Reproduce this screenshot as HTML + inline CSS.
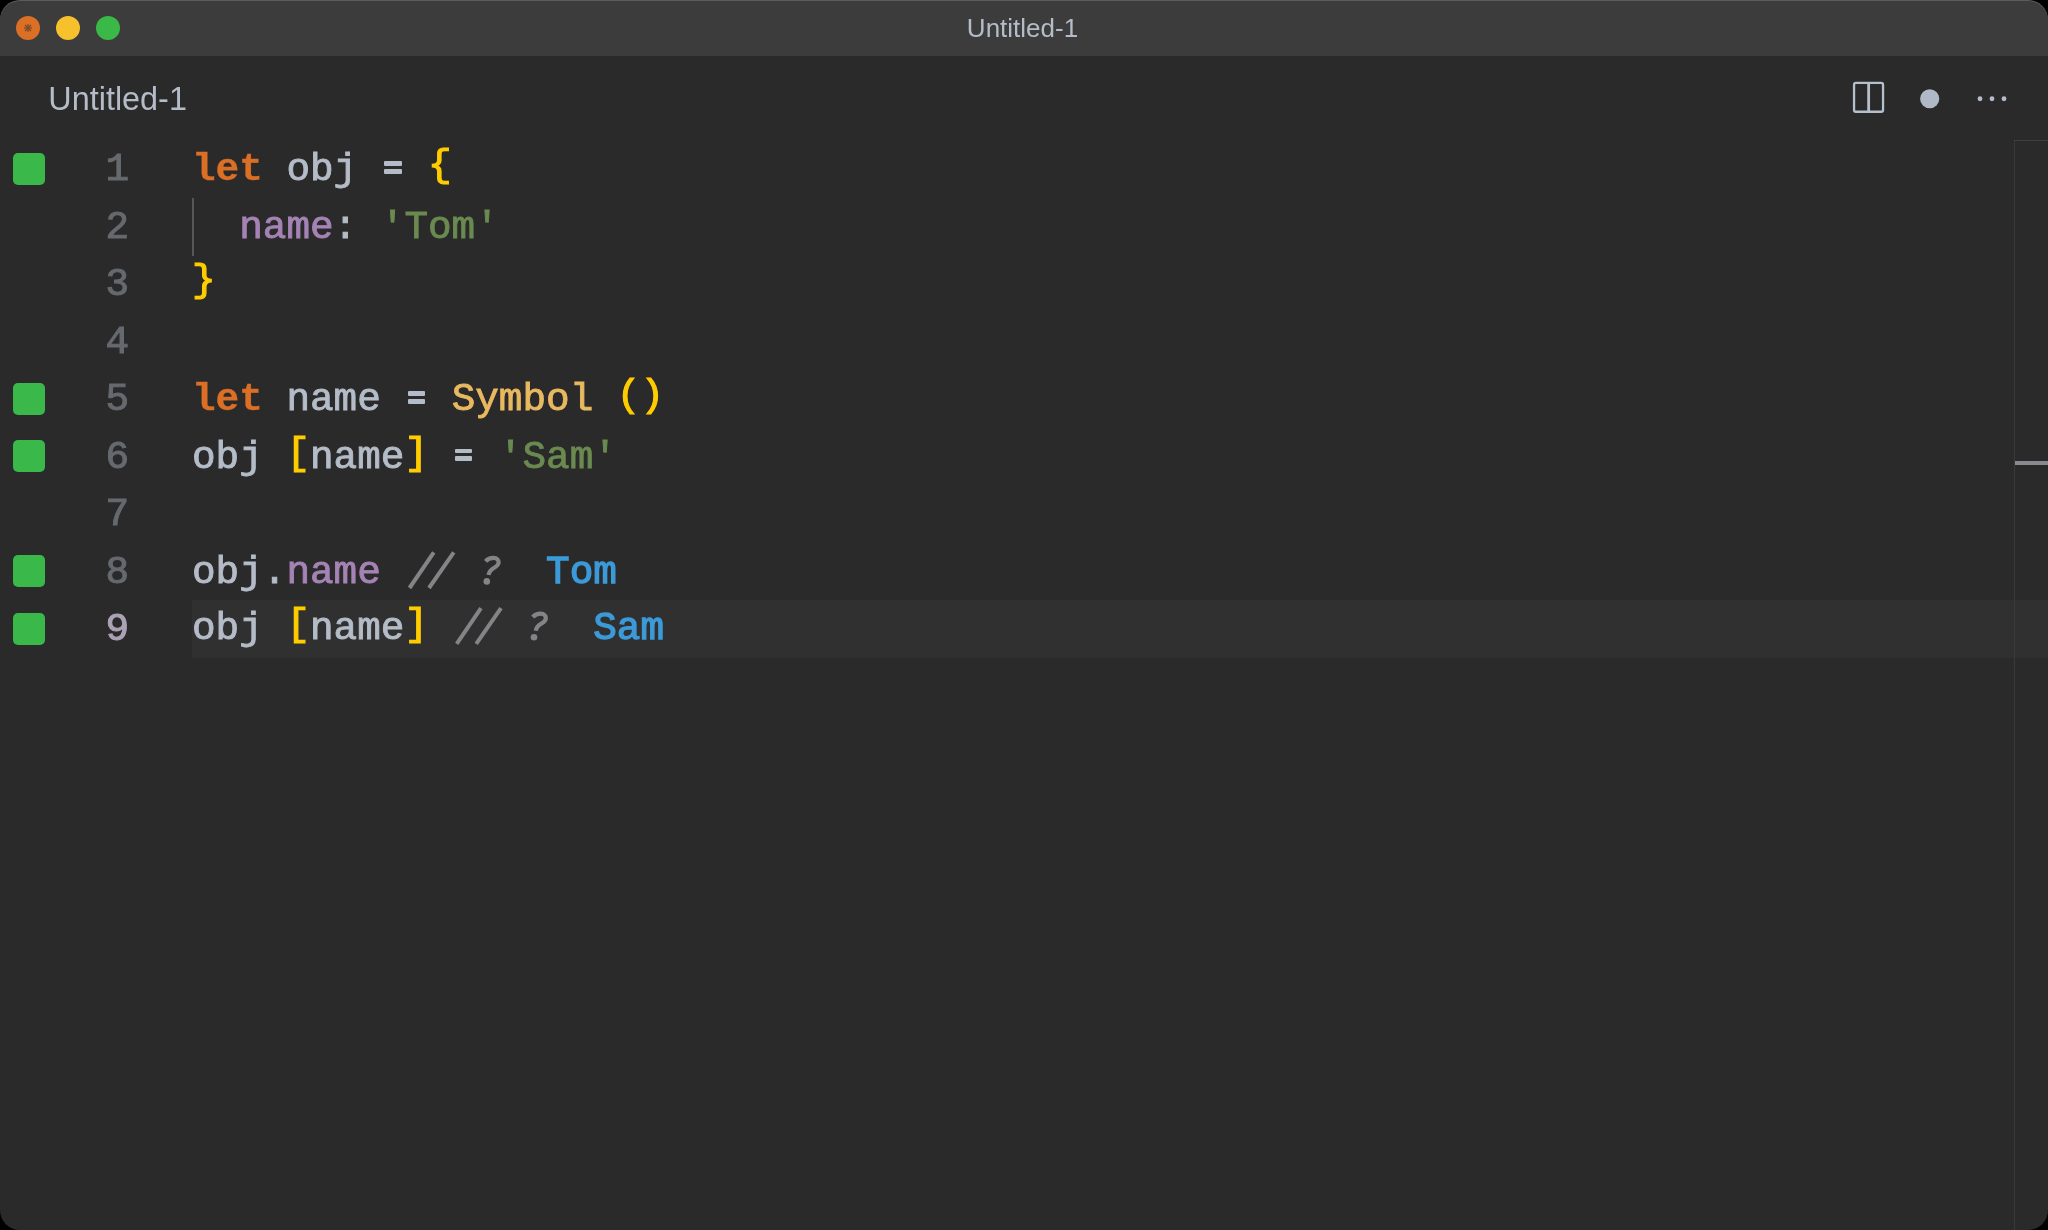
<!DOCTYPE html>
<html>
<head>
<meta charset="utf-8">
<style>
html,body{margin:0;padding:0;background:#000;width:2048px;height:1230px;overflow:hidden;}
#win{position:absolute;left:0;top:0;width:2048px;height:1230px;background:#2a2a2a;border-radius:20px;overflow:hidden;will-change:transform;}
#title{position:absolute;left:0;top:0;width:2048px;height:56px;background:#3c3c3c;}
#title .top{position:absolute;left:0;top:0;width:2048px;height:1px;background:#606266;}
.tl{position:absolute;top:16px;width:24px;height:24px;border-radius:50%;}
#ttext{position:absolute;left:-1.5px;top:0;width:2048px;text-align:center;font-family:"Liberation Sans",sans-serif;font-size:26px;line-height:56px;color:#b4bcc8;}
#tab{position:absolute;left:48.3px;top:79.3px;font-family:"Liberation Sans",sans-serif;font-size:32.4px;line-height:40px;color:#b4bcc8;}
.mono{font-family:"Liberation Mono",monospace;}
#code{position:absolute;left:192px;top:141px;will-change:transform;-webkit-text-stroke:0.9px currentColor;font-family:"Liberation Mono",monospace;font-size:39.33px;color:#b4bcc8;}
.ln{height:57.5px;line-height:57.5px;white-space:pre;}
.num{position:absolute;left:61px;width:68px;margin-top:1px;text-align:right;font-family:"Liberation Mono",monospace;font-size:39.33px;color:#66696e;height:57.5px;line-height:57.5px;-webkit-text-stroke:1px currentColor;}
.sq{position:absolute;left:13px;width:32px;height:32px;border-radius:5px;background:#3bb84a;}
.k{color:#dc6f26;font-weight:bold;-webkit-text-stroke:0.3px #dc6f26;}
.b{color:#ffcc00;position:relative;top:-4px;-webkit-text-stroke:1.2px #ffcc00;}
.p{color:#a583b5;}
.s{color:#6a8a50;}
.f{color:#e8b960;}
.c{color:#848488;font-style:italic;position:relative;left:3px;-webkit-text-stroke:1.6px #848488;}
.eq{position:relative;color:transparent;-webkit-text-stroke:0;}
.eq::before,.eq::after{content:"";position:absolute;left:3.3px;width:17.4px;background:#b4bcc8;border-radius:1px;}
.eq::before{top:14.4px;height:4.4px;}
.eq::after{top:21.5px;height:5.3px;}
.o{color:#3c9ad9;-webkit-text-stroke:1.3px #3c9ad9;}
</style>
</head>
<body>
<div id="win">
  <div id="title">
    <div class="tl" style="left:16px;background:#dc6f26;"></div>
    <svg style="position:absolute;left:22px;top:22px" width="12" height="12"><g stroke="#2a2a2a" stroke-width="1.2" opacity="0.55"><line x1="3" y1="3" x2="9" y2="9"/><line x1="9" y1="3" x2="3" y2="9"/><line x1="6" y1="2" x2="6" y2="10"/><line x1="2" y1="6" x2="10" y2="6"/></g></svg>
    <div class="tl" style="left:56px;background:#f6c12d;"></div>
    <div class="tl" style="left:96px;background:#3ab948;"></div>
    <div id="ttext">Untitled-1</div>
  </div>
  <div id="tab">Untitled-1</div>

  <!-- current line highlight -->
  <div style="position:absolute;left:192px;top:600px;width:1856px;height:57.5px;background:#303030;"></div>
  <!-- indent guide -->
  <div style="position:absolute;left:192px;top:197.5px;width:2px;height:58.5px;background:#555853;"></div>
  <!-- overview ruler -->
  <div style="position:absolute;left:2014px;top:140px;width:1px;height:1090px;background:#393939;"></div>
  <div style="position:absolute;left:2014px;top:140px;width:34px;height:1px;background:#3f3f3f;"></div>
  <div style="position:absolute;left:2015px;top:461px;width:33px;height:4px;background:#8a8a8e;"></div>

  <div class="sq" style="top:152.75px"></div>
  <div class="sq" style="top:382.75px"></div>
  <div class="sq" style="top:440.25px"></div>
  <div class="sq" style="top:555.25px"></div>
  <div class="sq" style="top:612.75px"></div>

  <div class="num" style="top:140px">1</div>
  <div class="num" style="top:197.5px">2</div>
  <div class="num" style="top:255px">3</div>
  <div class="num" style="top:312.5px">4</div>
  <div class="num" style="top:370px">5</div>
  <div class="num" style="top:427.5px">6</div>
  <div class="num" style="top:485px">7</div>
  <div class="num" style="top:542.5px">8</div>
  <div class="num" style="top:600px;color:#aca2b6">9</div>

  <div id="code">
<div class="ln"><span class="k">let</span> obj <span class="eq">=</span> <span class="b">{</span></div>
<div class="ln">  <span class="p">name</span>: <span class="s">'Tom'</span></div>
<div class="ln"><span class="b">}</span></div>
<div class="ln"> </div>
<div class="ln"><span class="k">let</span> name <span class="eq">=</span> <span class="f">Symbol</span> <span class="b">()</span></div>
<div class="ln">obj <span class="b">[</span>name<span class="b">]</span> <span class="eq">=</span> <span class="s">'Sam'</span></div>
<div class="ln"> </div>
<div class="ln">obj.<span class="p">name</span>       <span class="o">Tom</span></div>
<div class="ln" style="position:relative;top:-1.3px">obj <span class="b">[</span>name<span class="b">]</span>       <span class="o">Sam</span></div>
  </div>

  <svg style="position:absolute;left:0;top:0" width="2048" height="1230">
    <g stroke="#848488" stroke-width="4" fill="none">
      <line x1="409.5" y1="588" x2="433.8" y2="552.3"/>
      <line x1="429" y1="588" x2="453.8" y2="552.3"/>
      <line x1="456.7" y1="643.8" x2="481" y2="608.1"/>
      <line x1="476.2" y1="643.8" x2="501" y2="608.1"/>
      <path d="M485.6,561.3 C487.6,558.9 490.6,557.9 493.6,557.9 C496.8,557.9 498.7,559.9 498.6,562.5 C498.5,565.2 496.3,566.5 493.8,568 C491,569.7 489,571.6 488.6,575" stroke-width="4.2"/>
      <path d="M532.8,617.1 C534.8,614.7 537.8,613.7 540.8,613.7 C544,613.7 545.9,615.7 545.8,618.3 C545.7,621 543.5,622.3 541,623.8 C538.2,625.5 536.2,627.4 535.8,630.8" stroke-width="4.2"/>
    </g>
    <circle cx="486.8" cy="581.4" r="3.3" fill="#848488"/>
    <circle cx="534" cy="637.2" r="3.3" fill="#848488"/>
  </svg>
  <!-- right icons -->
  <svg style="position:absolute;left:1840px;top:70px" width="208" height="60" viewBox="1840 70 208 60">
    <rect x="1854.05" y="82.85" width="29" height="28.9" rx="1.8" fill="none" stroke="#b6c0cc" stroke-width="2.3"/>
    <line x1="1868.65" y1="83" x2="1868.65" y2="111.8" stroke="#b6c0cc" stroke-width="2.8"/>
    <circle cx="1929.7" cy="98.75" r="9.6" fill="#b0bac6"/>
    <circle cx="1980" cy="98.75" r="2.4" fill="#b4bcc8"/>
    <circle cx="1992" cy="98.75" r="2.4" fill="#b4bcc8"/>
    <circle cx="2004" cy="98.75" r="2.4" fill="#b4bcc8"/>
  </svg>
  <div style="position:absolute;left:0;top:0;width:2048px;height:1230px;border-radius:20px;box-shadow:inset 0 1px 0 rgba(235,240,255,0.18);pointer-events:none;"></div>
</div>
</body>
</html>
